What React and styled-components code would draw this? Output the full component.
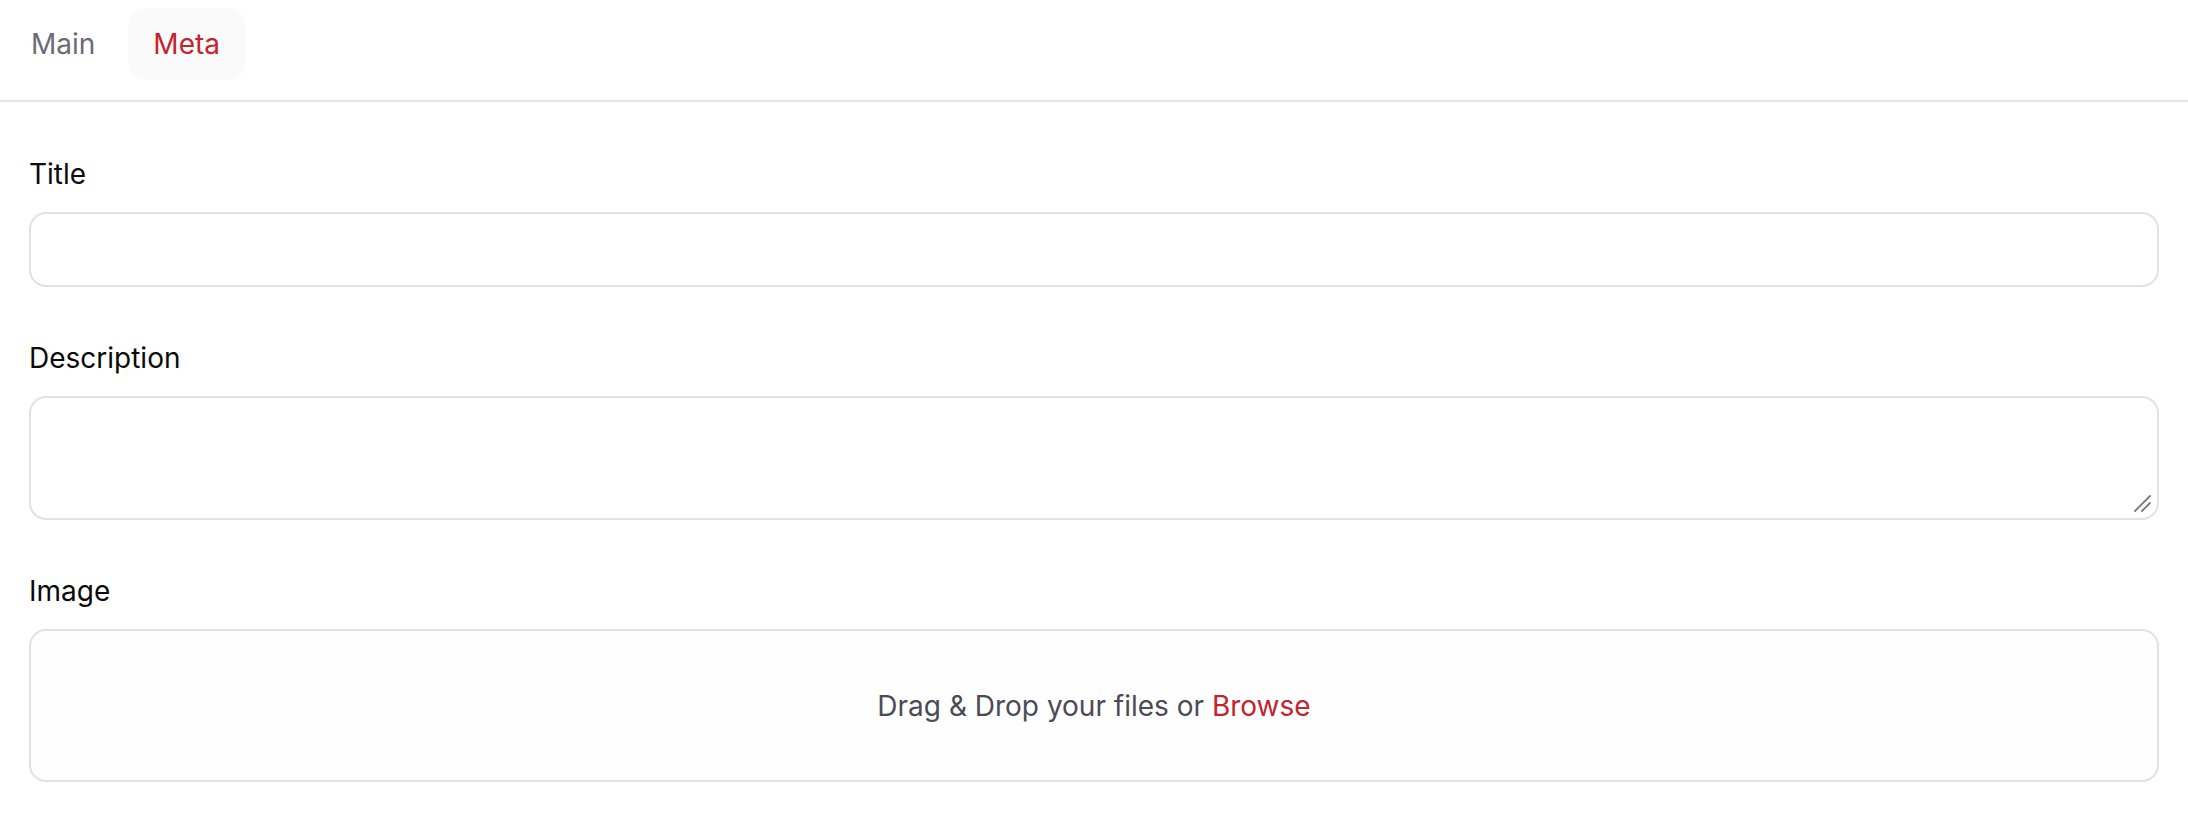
import React, { useState } from 'react'
import styled, { createGlobalStyle } from 'styled-components'

const GlobalStyle = createGlobalStyle`
  * { box-sizing: border-box; }
  body {
    margin: 0;
    background: #ffffff;
    font-family: Inter, "Noto Sans", sans-serif;
  }
`

const TabBar = styled.div`
  display: flex;
  gap: 8px;
  padding: 8px 0 20px 6px;
  border-bottom: 2px solid #e5e5e5;
`

const Tab = styled.button`
  height: 72px;
  padding: 0 25px;
  border: none;
  border-radius: 17px;
  background: ${p => (p.$active ? '#fafafa' : 'transparent')};
  color: ${p => (p.$active ? '#c3242f' : '#6b6b76')};
  font-family: inherit;
  font-size: 28px;
  cursor: pointer;
`

const Form = styled.div`
  display: flex;
  flex-direction: column;
  gap: 51px;
  padding: 52px 29px;
`

const Field = styled.div`
  display: flex;
  flex-direction: column;
`

const Label = styled.label`
  font-size: 28px;
  line-height: 40px;
  color: #0a0a0a;
  margin-bottom: 18px;
`

const Input = styled.input`
  height: 75px;
  width: 100%;
  border: 2px solid #e2e2e2;
  border-radius: 17px;
  background: #fff;
  padding: 0 22px;
  font-family: inherit;
  font-size: 28px;
  outline: none;
`

const AreaWrap = styled.div`
  position: relative;
  display: flex;
`

const TextArea = styled.textarea`
  height: 124px;
  width: 100%;
  border: 2px solid #e2e2e2;
  border-radius: 17px;
  background: #fff;
  padding: 16px 22px;
  font-family: inherit;
  font-size: 28px;
  outline: none;
  resize: vertical;
  &::-webkit-resizer {
    background: transparent;
  }
`

const Grip = styled.svg`
  position: absolute;
  right: 8px;
  bottom: 8px;
  width: 17px;
  height: 17px;
  pointer-events: none;
`

const DropZone = styled.div`
  height: 153px;
  display: flex;
  align-items: center;
  justify-content: center;
  border: 2px solid #e2e2e2;
  border-radius: 17px;
  background: #fefefe;
  color: #4b4b57;
  font-size: 28px;
`

const Browse = styled.span`
  color: #c3242f;
  cursor: pointer;
`

export default function App() {
  const [tab, setTab] = useState('meta')

  return (
    <>
      <GlobalStyle />
      <TabBar>
        <Tab $active={tab === 'main'} onClick={() => setTab('main')}>Main</Tab>
        <Tab $active={tab === 'meta'} onClick={() => setTab('meta')}>Meta</Tab>
      </TabBar>
      <Form>
        <Field>
          <Label>Title</Label>
          <Input type="text" />
        </Field>
        <Field>
          <Label>Description</Label>
          <AreaWrap>
            <TextArea />
            <Grip viewBox="0 0 17 17">
              <path d="M1 16 L16 1 M8 16 L16 8" stroke="#7a7a7a" strokeWidth="1.8" strokeLinecap="round" />
            </Grip>
          </AreaWrap>
        </Field>
        <Field>
          <Label>Image</Label>
          <DropZone>
            <span>Drag &amp; Drop your files or&nbsp;<Browse>Browse</Browse></span>
          </DropZone>
        </Field>
      </Form>
    </>
  )
}
